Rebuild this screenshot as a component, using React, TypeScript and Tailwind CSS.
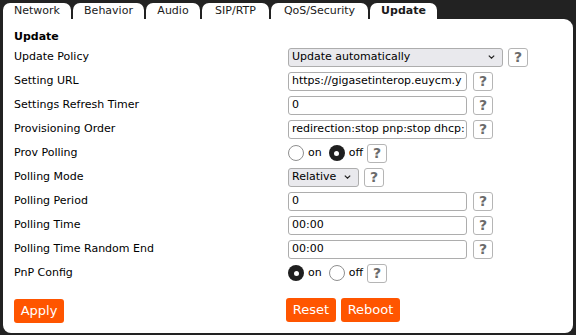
import { ReactNode } from "react";

const TABS = [
  { label: "Network", w: "w-[68px]" },
  { label: "Behavior", w: "w-[71px]" },
  { label: "Audio", w: "w-[54px]" },
  { label: "SIP/RTP", w: "w-[67px]" },
  { label: "QoS/Security", w: "w-[97px]" },
  { label: "Update", w: "w-[67px]" },
];

function Help() {
  return (
    <span className="ml-[5px] flex h-[19px] w-[20px] items-center justify-center rounded-[3px] border border-[#b5b5b5] bg-white text-[14px] font-bold leading-none text-[#6b6b6b]">
      ?
    </span>
  );
}

function TextInput({ value }: { value: string }) {
  return (
    <div className="flex h-[19px] w-[179px] items-center overflow-hidden whitespace-nowrap rounded-[3px] border border-[#adadad] bg-white pl-[3px] text-[11px] text-black">
      {value}
    </div>
  );
}

function Select({ value, width }: { value: string; width: string }) {
  return (
    <div
      className={`flex h-[19px] ${width} items-center justify-between rounded-[3px] border border-[#adadad] bg-[#e9e9ed] pl-[3px] pr-[7px] text-[11px] text-black`}
    >
      <span>{value}</span>
      <svg width="7" height="4" viewBox="0 0 7 4">
        <path d="M0.8 0.6 L3.5 3.2 L6.2 0.6" fill="none" stroke="#222" strokeWidth="1.2" />
      </svg>
    </div>
  );
}

function Radio({ checked }: { checked: boolean }) {
  return checked ? (
    <span className="flex h-[16px] w-[16px] items-center justify-center rounded-full bg-[#1f1f1f]">
      <span className="h-[5px] w-[5px] rounded-full bg-white" />
    </span>
  ) : (
    <span className="h-[16px] w-[16px] rounded-full border border-[#8f8f8f] bg-white" />
  );
}

function OnOff({ on }: { on: boolean }) {
  return (
    <div className="flex items-center text-[11px] text-black">
      <Radio checked={on} />
      <span className="ml-[4px] mr-[7px]">on</span>
      <Radio checked={!on} />
      <span className="ml-[4px]">off</span>
      <span className="-ml-[1px]">
        <Help />
      </span>
    </div>
  );
}

function Row({ label, children }: { label: string; children: ReactNode }) {
  return (
    <div className="flex h-[24px] items-center">
      <div className="w-[274px] text-[11px] text-black">{label}</div>
      <div className="flex items-center">{children}</div>
    </div>
  );
}

function OrangeButton({ label, width }: { label: string; width: string }) {
  return (
    <button className={`h-[24px] ${width} rounded-[3px] bg-[#ff5500] text-[13px] text-white`}>
      {label}
    </button>
  );
}

export default function App() {
  return (
    <div
      className="h-[335px] w-[576px] bg-[#222222] pl-[3px] pr-[3px] pt-[3px]"
      style={{ fontFamily: '"DejaVu Sans", Verdana, sans-serif' }}
    >
      <div className="flex h-[16px] gap-[2px]">
        {TABS.map((t) => (
          <div
            key={t.label}
            className={`flex h-[16px] ${t.w} items-center justify-center rounded-t-[7px] bg-white text-[11px] text-[#1a1a1a] ${
              t.label === "Update" ? "font-bold" : ""
            }`}
          >
            {t.label}
          </div>
        ))}
      </div>

      <div className="h-[314px] rounded-b-[8px] rounded-tr-[9px] bg-white pl-[11px] pt-[11px]">
        <div className="h-[14px] text-[11px] font-bold leading-[14px] text-black">Update</div>

        <div className="mt-[1px]">
          <Row label="Update Policy">
            <Select value="Update automatically" width="w-[215px]" />
            <Help />
          </Row>
          <Row label="Setting URL">
            <TextInput value="https://gigasetinterop.euycm.y" />
            <span className="ml-[1px]">
              <Help />
            </span>
          </Row>
          <Row label="Settings Refresh Timer">
            <TextInput value="0" />
            <span className="ml-[1px]">
              <Help />
            </span>
          </Row>
          <Row label="Provisioning Order">
            <TextInput value="redirection:stop pnp:stop dhcp:" />
            <span className="ml-[1px]">
              <Help />
            </span>
          </Row>
          <Row label="Prov Polling">
            <OnOff on={false} />
          </Row>
          <Row label="Polling Mode">
            <Select value="Relative" width="w-[71px]" />
            <Help />
          </Row>
          <Row label="Polling Period">
            <TextInput value="0" />
            <span className="ml-[1px]">
              <Help />
            </span>
          </Row>
          <Row label="Polling Time">
            <TextInput value="00:00" />
            <span className="ml-[1px]">
              <Help />
            </span>
          </Row>
          <Row label="Polling Time Random End">
            <TextInput value="00:00" />
            <span className="ml-[1px]">
              <Help />
            </span>
          </Row>
          <Row label="PnP Config">
            <OnOff on={true} />
          </Row>
        </div>

        <div className="mt-[13px] flex">
          <div className="w-[272px]">
            <OrangeButton label="Apply" width="w-[50px]" />
          </div>
          <div className="flex gap-[5px]">
            <OrangeButton label="Reset" width="w-[50px]" />
            <OrangeButton label="Reboot" width="w-[59px]" />
          </div>
        </div>
      </div>
    </div>
  );
}
